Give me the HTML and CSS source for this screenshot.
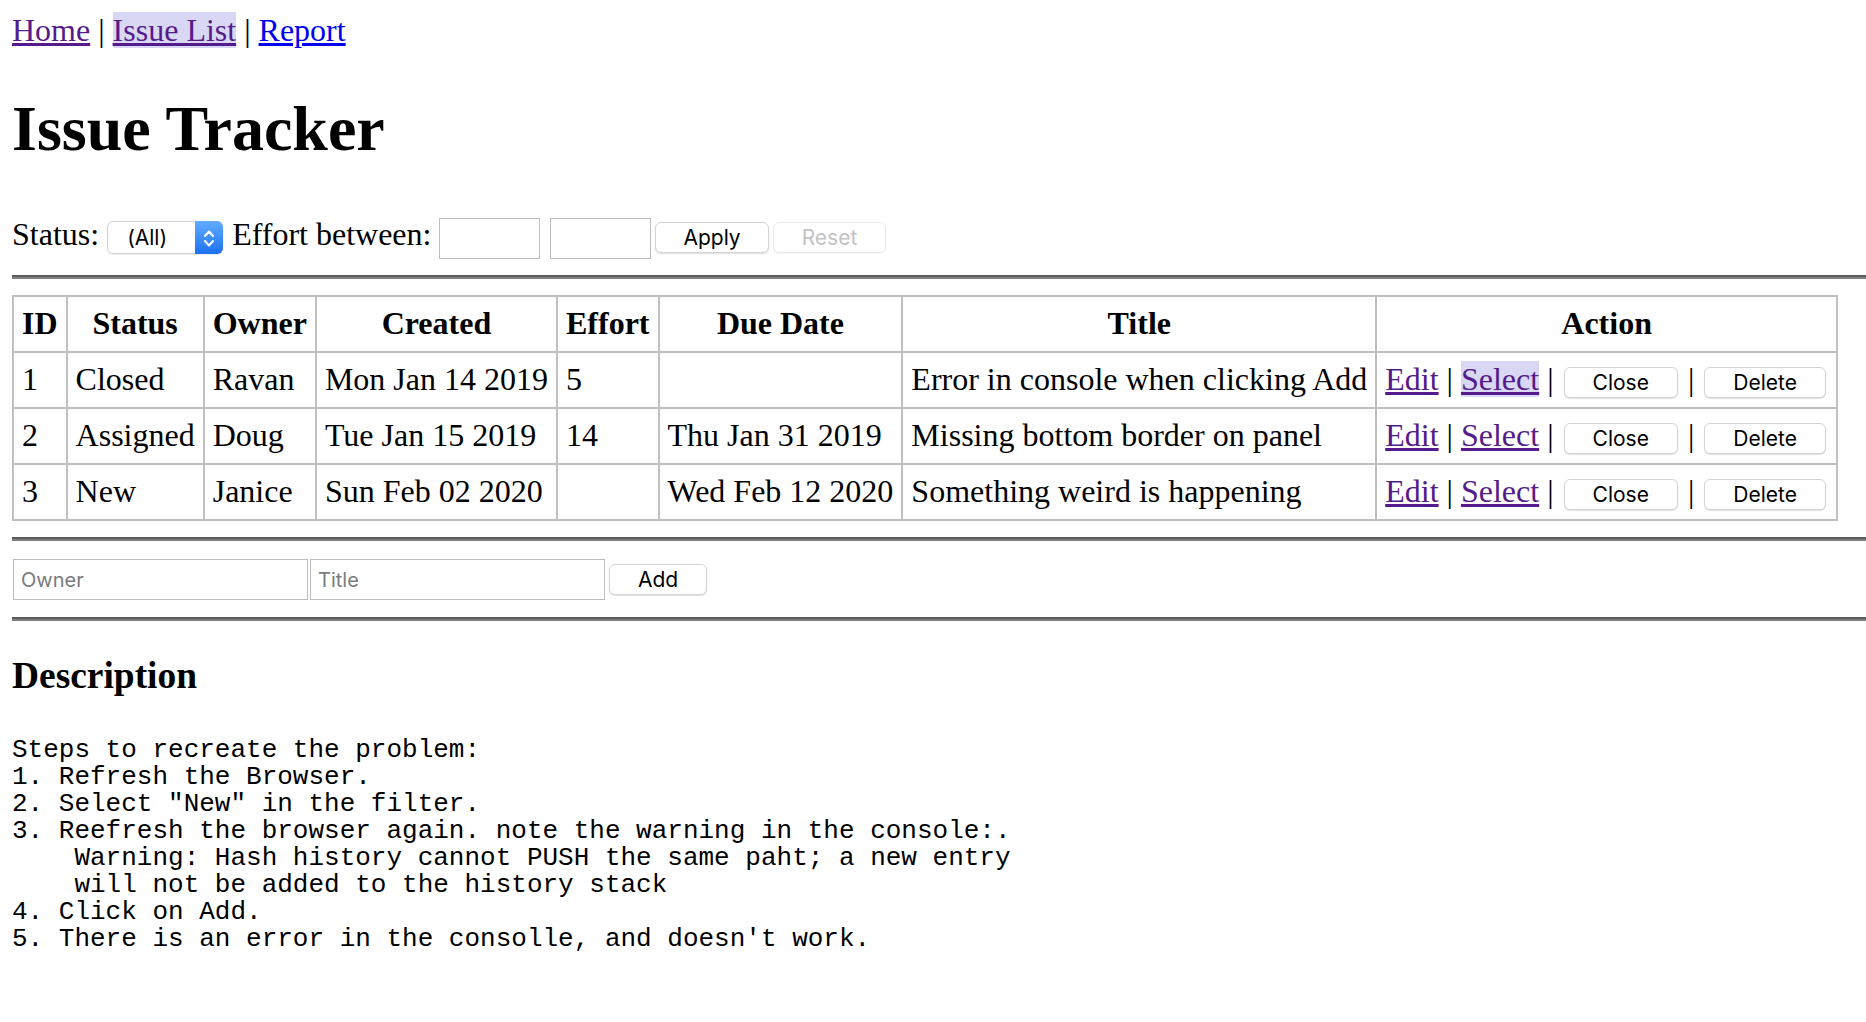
FILE: index.html
```html
<!DOCTYPE html>
<html lang="en">
<head>
<meta charset="utf-8">
<title>Issue Tracker</title>
<link rel="stylesheet" href="styles.css">
</head>
<body>
<nav class="nav"><a class="link visited" href="#/">Home</a> | <a class="link visited current" href="#/issues">Issue List</a> | <a class="link" href="#/report">Report</a></nav>
<h1 class="title">Issue Tracker</h1>
<div class="filter">Status: <span class="select"><select class="select-input"><option>(All)</option><option>New</option><option>Assigned</option><option>Fixed</option><option>Closed</option></select><span class="select-arrow"><svg width="28" height="33" viewBox="0 0 28 33"><polyline points="10,15 14,10.5 18,15" fill="none" stroke="#fff" stroke-width="2" stroke-linecap="round" stroke-linejoin="round"/><polyline points="10,20 14,24.5 18,20" fill="none" stroke="#fff" stroke-width="2" stroke-linecap="round" stroke-linejoin="round"/></svg></span></span> Effort between: <input class="field field-small" type="text"> <input class="field field-small field-second" type="text"><button class="btn btn-apply">Apply</button><button class="btn btn-reset" disabled>Reset</button></div>
<hr class="rule">
<table class="issues">
<thead>
<tr><th>ID</th><th>Status</th><th>Owner</th><th>Created</th><th>Effort</th><th>Due Date</th><th>Title</th><th>Action</th></tr>
</thead>
<tbody>
<tr><td>1</td><td>Closed</td><td>Ravan</td><td>Mon Jan 14 2019</td><td>5</td><td></td><td>Error in console when clicking Add</td><td><a class="link visited" href="#/edit/1">Edit</a> | <a class="link visited current" href="#/issues/1">Select</a> | <button class="btn">Close</button> | <button class="btn">Delete</button></td></tr>
<tr><td>2</td><td>Assigned</td><td>Doug</td><td>Tue Jan 15 2019</td><td>14</td><td>Thu Jan 31 2019</td><td>Missing bottom border on panel</td><td><a class="link visited" href="#/edit/2">Edit</a> | <a class="link visited" href="#/issues/2">Select</a> | <button class="btn">Close</button> | <button class="btn">Delete</button></td></tr>
<tr><td>3</td><td>New</td><td>Janice</td><td>Sun Feb 02 2020</td><td></td><td>Wed Feb 12 2020</td><td>Something weird is happening</td><td><a class="link visited" href="#/edit/3">Edit</a> | <a class="link visited" href="#/issues/3">Select</a> | <button class="btn">Close</button> | <button class="btn">Delete</button></td></tr>
</tbody>
</table>
<hr class="rule">
<div class="add-form"><input class="field field-wide" type="text" placeholder="Owner"><input class="field field-wide" type="text" placeholder="Title"><button class="btn btn-add">Add</button></div>
<hr class="rule">
<h3 class="desc-title">Description</h3>
<pre class="desc-text">Steps to recreate the problem:
1. Refresh the Browser.
2. Select "New" in the filter.
3. Reefresh the browser again. note the warning in the console:.
    Warning: Hash history cannot PUSH the same paht; a new entry
    will not be added to the history stack
4. Click on Add.
5. There is an error in the consolle, and doesn't work.</pre>
</body>
</html>
```

FILE: styles.css
```css
html, body {
  background: #ffffff;
}

body {
  margin: 12px 0 0 12px;
  font-family: "Liberation Serif", "Times New Roman", serif;
  font-size: 32px;
  color: #000000;
}

.link {
  color: #0000ee;
  text-decoration: underline;
}

.link.visited {
  color: #551a8b;
}

.link.current {
  background: #d9d8f4;
}

.title {
  font-size: 64px;
  font-weight: bold;
  margin: 43px 0;
}

.filter {
  padding-top: 7px;
}

.select {
  display: inline-flex;
  vertical-align: baseline;
  box-sizing: border-box;
  height: 33px;
  border: 1px solid #d2d2d2;
  border-radius: 6px;
  background: #ffffff;
  box-shadow: 0 1px 1px rgba(0, 0, 0, 0.08);
  margin-right: 1px;
}

.select-input {
  appearance: none;
  -webkit-appearance: none;
  border: 0;
  background: transparent;
  font-family: Inter, "Helvetica Neue", sans-serif;
  font-size: 21px;
  color: #000000;
  padding: 0 0 0 19px;
  margin: 0;
  width: 87px;
  height: 31px;
  outline: none;
}

.select-arrow {
  display: flex;
  width: 28px;
  height: 33px;
  margin: -1px -1px -1px 0;
  border-radius: 0 6px 6px 0;
  background: linear-gradient(#63acff, #1a72f1);
}

.field {
  box-sizing: border-box;
  height: 41px;
  border: 1px solid #bdbdbd;
  border-radius: 0;
  background: #ffffff;
  font-family: Inter, "Helvetica Neue", sans-serif;
  font-size: 20px;
  color: #000000;
  padding: 0 7px;
  margin: 0;
  vertical-align: baseline;
}

.field::placeholder {
  color: #7b7b7b;
}

.field-small {
  width: 101px;
}

.field-second {
  margin-left: 2px;
}

.field-wide {
  width: 295px;
  margin: 0 1px;
}

.btn {
  box-sizing: border-box;
  height: 31px;
  padding: 0 28px;
  font-family: Inter, "Helvetica Neue", sans-serif;
  font-size: 21px;
  color: #000000;
  background: #ffffff;
  border: 1px solid #d4d4d4;
  border-radius: 6px;
  box-shadow: 0 1px 1px rgba(0, 0, 0, 0.12);
  margin: 0 2px;
  vertical-align: baseline;
}

.btn-apply {
  margin-left: 4px;
  padding: 0 27px;
}

.btn-reset {
  margin-left: 2px;
}

.btn:disabled {
  color: #c3c3c3;
  border-color: #e9e9e9;
  box-shadow: 0 1px 1px rgba(0, 0, 0, 0.04);
}

.add-form {
  padding: 1px 0 1px;
}

.btn-add {
  margin-left: 3px;
}

.rule {
  height: 0;
  margin: 16px 0;
  border: 0;
  border-top: 2px solid #5c5c5c;
  border-bottom: 2px solid #7f7f7f;
}

.issues {
  border-collapse: collapse;
  border: 2px solid #c0c0c0;
}

.issues tr {
  height: 56px;
}

.issues th,
.issues td {
  border: 2px solid #c0c0c0;
  padding: 8px;
  white-space: nowrap;
}

.issues th {
  text-align: center;
  font-weight: bold;
}

.issues td {
  text-align: left;
}

.desc-title {
  font-size: 37.44px;
  font-weight: bold;
  margin: 33px 0 40px;
}

.desc-text {
  font-family: "Liberation Mono", "Courier New", monospace;
  font-size: 26px;
  line-height: 27px;
  margin: 0;
  white-space: pre;
}
```
